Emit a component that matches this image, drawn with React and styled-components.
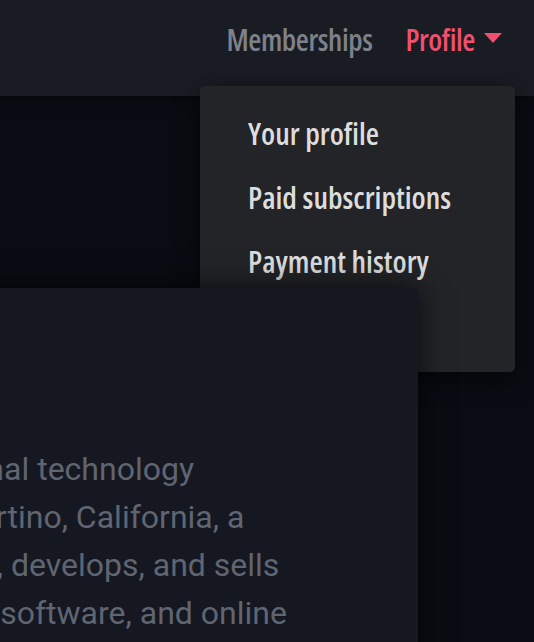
import React from "react";
import styled, { createGlobalStyle } from "styled-components";

const GlobalStyle = createGlobalStyle`
  html, body {
    margin: 0;
    height: 100%;
    overflow: hidden;
    background: #0a0c13;
  }
`;

const navFont = `
  font-family: "Open Sans", "Liberation Sans Narrow", sans-serif;
  font-stretch: 75%;
  line-height: 40px;
`;

export default function App() {
  return (
    <>
      <GlobalStyle />
      <Header>
        <Nav>
          <NavItem>Memberships</NavItem>
          <NavItem active>
            Profile
            <Caret />
          </NavItem>
        </Nav>
        <Dropdown>
          <MenuItem>Your profile</MenuItem>
          <MenuItem>Paid subscriptions</MenuItem>
          <MenuItem>Payment history</MenuItem>
          <MenuItem>Sign out</MenuItem>
        </Dropdown>
      </Header>
      <Main>
        <Card>
          <Text>
            Apple is an American multinational technology company headquartered
            in Cupertino, California, a renowned company that designs, develops,
            and sells consumer electronics, computer software, and online
            services.
          </Text>
        </Card>
      </Main>
    </>
  );
}

const Header = styled.header`
  position: relative;
  z-index: 1;
  height: 96px;
  box-sizing: border-box;
  padding: 20px 32px 0;
  display: flex;
  justify-content: flex-end;
  align-items: flex-start;
  background: #191c23;
  box-shadow: 0 2px 12px rgba(0, 0, 0, 0.55);
`;

const Nav = styled.nav`
  display: flex;
  gap: 33px;
`;

const NavItem = styled.a`
  ${navFont}
  font-size: 30px;
  font-weight: 600;
  letter-spacing: -0.4px;
  display: flex;
  align-items: flex-start;
  gap: 9px;
  color: ${({ active }) => (active ? "#f0506e" : "#7d8189")};
  cursor: pointer;
`;

const Caret = styled.span`
  margin-top: 13px;
  width: 0;
  height: 0;
  border-left: 9.5px solid transparent;
  border-right: 9.5px solid transparent;
  border-top: 10px solid #f0506e;
`;

const Dropdown = styled.div`
  position: absolute;
  top: 86px;
  right: 19px;
  width: 315px;
  box-sizing: border-box;
  padding: 15px 0;
  background: #222427;
  border-radius: 5px;
  box-shadow: 0 6px 24px rgba(0, 0, 0, 0.6);
`;

const MenuItem = styled.a`
  ${navFont}
  font-size: 30.5px;
  font-weight: 550;
  display: block;
  padding: 12px 48px;
  color: #dcdddf;
  cursor: pointer;
`;

const Main = styled.main`
  padding-top: 192px;
`;

const Card = styled.section`
  position: relative;
  z-index: 2;
  margin-left: -514px;
  width: 932px;
  box-sizing: border-box;
  padding: 157px 48px 48px;
  background: #151821;
  box-shadow: 0 0 28px rgba(0, 0, 0, 0.75);
`;

const Text = styled.p`
  margin: 0;
  max-width: 776px;
  font-family: Roboto, "Liberation Sans", sans-serif;
  font-size: 32px;
  line-height: 48px;
  color: #5f6571;
`;
